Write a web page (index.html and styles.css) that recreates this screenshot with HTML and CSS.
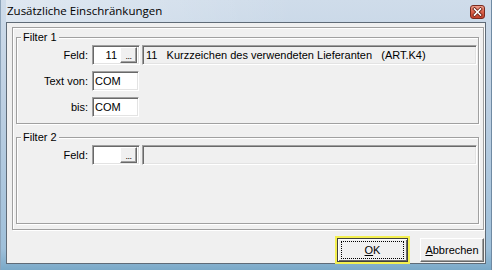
FILE: index.html
```html
<html>
<head>
  <link rel="stylesheet" href="styles.css">
</head>
<body>
  <!-- Dialog window -->
  <div class="window">
    <div class="titlebar">
      <span class="title">Zusätzliche Einschränkungen</span>
      <div class="close">
        <svg width="13" height="12" viewBox="0 0 13 12">
          <path d="M3.5 3 L9.5 9 M9.5 3 L3.5 9" stroke="#6a2216" stroke-width="3.2" stroke-linecap="square"/>
          <path d="M3.5 3 L9.5 9 M9.5 3 L3.5 9" stroke="#ffffff" stroke-width="1.6" stroke-linecap="square"/>
        </svg>
      </div>
    </div>

    <div class="client">
      <div class="panel">
        <!-- Filter 1 -->
        <fieldset class="group">
          <legend>Filter 1</legend>
          <div class="row">
            <label class="label">Feld:</label>
            <div class="edit field-edit">
              <span class="field-value">11</span>
              <span class="dots">...</span>
            </div>
            <div class="edit desc">11   Kurzzeichen des verwendeten Lieferanten   (ART.K4)</div>
          </div>
          <div class="row">
            <label class="label">Text von:</label>
            <div class="edit text-edit">COM</div>
          </div>
          <div class="row">
            <label class="label">bis:</label>
            <div class="edit text-edit">COM</div>
          </div>
        </fieldset>

        <!-- Filter 2 -->
        <fieldset class="group group-grow">
          <legend>Filter 2</legend>
          <div class="row">
            <label class="label">Feld:</label>
            <div class="edit field-edit">
              <span class="field-value"></span>
              <span class="dots">...</span>
            </div>
            <div class="edit desc"></div>
          </div>
        </fieldset>
      </div>

      <div class="buttons">
        <button class="btn btn-default"><span class="focus"><u>O</u>K</span></button>
        <button class="btn btn-cancel"><span class="caption"><u>A</u>bbrechen</span></button>
      </div>
    </div>
  </div>
</body>
</html>
```

FILE: styles.css
```css
/* General styling */
body {
  margin: 0;
  font-family: "Liberation Sans", Arial, sans-serif;
  font-size: 11px;
  color: #000;
}

/* Window frame */
.window {
  width: 492px;
  height: 270px;
  box-sizing: border-box;
  padding: 0 6px 6px 6px;
  display: flex;
  flex-direction: column;
  background: linear-gradient(to bottom, #cfdcea 0%, #bccfe2 40%, #9fc0da 92%, #7aa9c8 100%);
  box-shadow: inset 1px 0 0 #8da4ba, inset -1px 0 0 #6f8aa3;
}

.titlebar {
  height: 22px;
  display: flex;
  justify-content: space-between;
  align-items: flex-start;
  background: linear-gradient(to right, rgba(255, 255, 255, 0.35), rgba(255, 255, 255, 0) 60%);
}

.title {
  font-family: "Open Sans", "Liberation Sans", sans-serif;
  font-size: 11.5px;
  line-height: 22px;
  padding-left: 1px;
  color: #000;
}

.close {
  width: 13px;
  height: 12px;
  margin: 5px 1px 0 0;
  border: 1px solid #7a2a1e;
  border-radius: 3px;
  background: linear-gradient(to bottom, #eea08e 0%, #d9614a 50%, #c2412b 100%);
  display: flex;
}

/* Client area */
.client {
  flex: 1;
  display: flex;
  flex-direction: column;
  border: 1px solid #5f6b77;
  background-color: #f0f0f0;
}

.panel {
  flex: 1;
  display: flex;
  flex-direction: column;
  margin: 4px 1px 0 5px;
  padding: 0 3px 5px 3px;
  border: 1px solid #a0a0a0;
  box-shadow: inset 1px 1px 0 #fff, 1px 1px 0 #fff;
}

/* Group boxes */
.group {
  margin: 3px 1px 0 0;
  padding: 1px 0 6px 0;
  border: 1px solid #a0a0a0;
  box-shadow: inset 1px 1px 0 #fff, 1px 1px 0 #fff;
  min-width: 0;
}

.group + .group {
  margin-top: 7px;
}

.group-grow {
  flex: 1;
}

.group legend {
  margin-left: 4px;
  padding: 0 2px;
  line-height: 13px;
  background-color: #f0f0f0;
}

.row {
  display: flex;
  align-items: center;
  height: 20px;
}

.row + .row {
  margin-top: 6px;
}

.label {
  width: 71px;
  margin-right: 4px;
  text-align: right;
}

/* Sunken edit boxes */
.edit {
  box-sizing: border-box;
  height: 20px;
  border: 1px solid;
  border-color: #a0a0a0 #fff #fff #a0a0a0;
  box-shadow: inset 1px 1px 0 #696969, inset -1px -1px 0 #e3e3e3;
  background-color: #fff;
  display: flex;
  align-items: center;
}

.field-edit {
  width: 48px;
  justify-content: flex-end;
}

.field-value {
  padding-right: 3px;
}

.dots {
  box-sizing: border-box;
  width: 17px;
  height: 16px;
  margin-right: 2px;
  border: 1px solid;
  border-color: #fff #696969 #696969 #fff;
  box-shadow: inset -1px -1px 0 #a0a0a0;
  background-color: #f0f0f0;
  font-size: 9px;
  line-height: 17px;
  text-align: center;
  letter-spacing: -0.5px;
}

.desc {
  width: 335px;
  margin-left: 2px;
  padding-left: 3px;
  background-color: #f0f0f0;
  white-space: pre;
}

.text-edit {
  width: 47px;
  padding-left: 2px;
}

/* Dialog buttons */
.buttons {
  display: flex;
  justify-content: flex-end;
  gap: 12px;
  padding: 8px 1px 1px 0;
}

.btn {
  box-sizing: border-box;
  height: 24px;
  padding: 0;
  font-family: "Liberation Sans", Arial, sans-serif;
  font-size: 11px;
  color: #000;
  background-color: #f0f0f0;
  border: 1px solid;
  border-color: #fff #696969 #696969 #fff;
  box-shadow: inset -1px -1px 0 #a0a0a0;
}

.btn-default {
  width: 71px;
  border-color: #404040;
  box-shadow: inset 1px 1px 0 #fff, inset -1px -1px 0 #696969;
  outline: 2px solid #f4f050;
}

.btn-cancel {
  width: 64px;
}

.focus {
  display: block;
  margin: 2px 3px;
  height: 16px;
  line-height: 16px;
  border: 1px dotted #000;
}
```
